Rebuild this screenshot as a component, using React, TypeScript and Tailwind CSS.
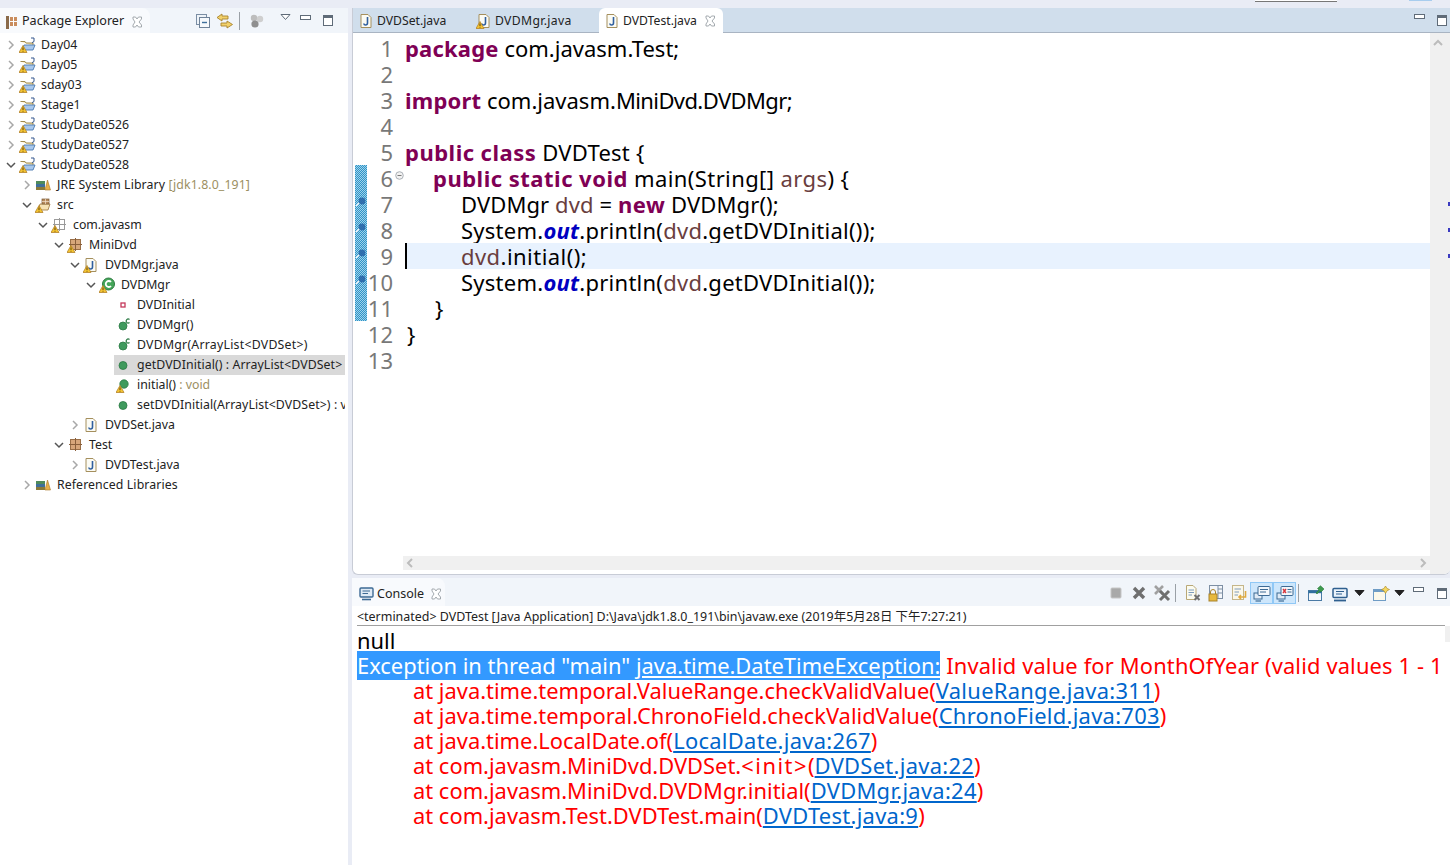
import React from 'react';

const uiFont = "font-['Noto_Sans','Noto_Sans_CJK_SC',sans-serif]";

const Warn = ({ x = 0, y = 8 }: { x?: number; y?: number }) => (
  <g transform={`translate(${x} ${y})`}>
    <path d="M4 0.5 L8 7.5 H0 Z" fill="#f4c430" stroke="#b5832a" strokeWidth="0.8" />
    <path d="M4 2.5 V5 M4 5.8 V6.6" stroke="#4a3000" strokeWidth="0.9" />
  </g>
);

const Chevron = ({ open }: { open?: boolean }) => (
  <svg width="12" height="12" viewBox="0 0 12 12" fill="none" className="shrink-0">
    {open ? (
      <path d="M2 4 L6 8 L10 4" stroke="#555" strokeWidth="1.5" />
    ) : (
      <path d="M4 2 L8 6 L4 10" stroke="#a8a8a8" strokeWidth="1.5" />
    )}
  </svg>
);

const ProjectIcon = () => (
  <svg width="17" height="16" viewBox="0 0 17 16" fill="none">
    <path d="M1.5 4.5 H6 L7 6 H14 V9" stroke="#a08a50" strokeWidth="1" fill="#f3e5b8" />
    <path d="M3 13 L5 8 H16 L14 13 Z" fill="#a9c8ec" stroke="#4a78b0" strokeWidth="0.9" />
    <path d="M12 1 H15 V4 Q15 5.5 13 5.5" stroke="#33548c" strokeWidth="1" />
    <Warn x={0} y={8} />
  </svg>
);

const LibIcon = () => (
  <svg width="16" height="16" viewBox="0 0 16 16">
    <rect x="1" y="4" width="9" height="3" fill="#4f8a5b" />
    <rect x="1" y="7" width="9" height="3" fill="#3f6f9c" />
    <rect x="1" y="10" width="9" height="3" fill="#8a7a3a" />
    <path d="M10 13 L12.5 3 L15.5 13 Z" fill="#e8b04a" stroke="#a8752a" strokeWidth="0.6" />
  </svg>
);

const SrcIcon = () => (
  <svg width="17" height="16" viewBox="0 0 17 16" fill="none">
    <path d="M3 13 L5 7 H15 L13 13 Z" fill="#f6e3b4" stroke="#a5814b" strokeWidth="0.9" />
    <rect x="7" y="2" width="7" height="5" fill="#b98d5e" stroke="#7a5a35" strokeWidth="0.7" />
    <path d="M10.5 2 V7 M7 4.5 H14" stroke="#f3e5d0" strokeWidth="0.7" />
    <Warn x={0} y={8} />
  </svg>
);

const PkgIcon = ({ empty, warn }: { empty?: boolean; warn?: boolean }) => (
  <svg width="16" height="16" viewBox="0 0 16 16" fill="none">
    <rect x="3.5" y="2.5" width="10" height="10" fill={empty ? '#fff' : '#d7a67a'} stroke={empty ? '#9a9a9a' : '#9a6f47'} />
    <path d="M8.5 1 V14 M2 7.5 H15" stroke={empty ? '#9a9a9a' : '#8a5f3b'} />
    {warn && <Warn x={0} y={8} />}
  </svg>
);

const JavaIcon = ({ warn }: { warn?: boolean }) => (
  <svg width="15" height="16" viewBox="0 0 15 16" fill="none" className="shrink-0">
    <path d="M3 1.5 H10 L13 4.5 V14.5 H3 Z" fill="#fbfbf4" stroke="#a58f5d" />
    <path d="M9.5 4 V10 Q9.5 12 7.5 12 Q6 12 5.8 10.5" stroke="#2f5f9f" strokeWidth="1.6" />
    {warn && <Warn x={0} y={8} />}
  </svg>
);

const ClassIcon = () => (
  <svg width="17" height="16" viewBox="0 0 17 16" fill="none">
    <circle cx="9.5" cy="7" r="6" fill="#45a65a" stroke="#2c7a3f" />
    <path d="M12 5 A3 3 0 1 0 12 9" stroke="#fff" strokeWidth="1.8" />
    <Warn x={0} y={8} />
  </svg>
);

const FieldIcon = () => (
  <svg width="16" height="16" viewBox="0 0 16 16">
    <rect x="5" y="6" width="4" height="4" fill="#fff" stroke="#c4385a" strokeWidth="1.3" />
  </svg>
);

const MethodIcon = () => (
  <svg width="16" height="16" viewBox="0 0 16 16">
    <circle cx="7" cy="8.5" r="4" fill="#3f9a5d" stroke="#2c7a45" strokeWidth="0.8" />
  </svg>
);

const CtorIcon = () => (
  <svg width="16" height="16" viewBox="0 0 16 16" fill="none">
    <circle cx="7" cy="9" r="4" fill="#3f9a5d" stroke="#2c7a45" strokeWidth="0.8" />
    <path d="M13.5 2.5 A2 2 0 1 0 13.5 5.5" stroke="#2c7a45" strokeWidth="1.2" />
  </svg>
);

const WarnMethodIcon = () => (
  <svg width="16" height="16" viewBox="0 0 16 16">
    <circle cx="8" cy="7" r="4.2" fill="#3f9a5d" stroke="#2c7a45" strokeWidth="0.8" />
    <Warn x={0} y={8} />
  </svg>
);

const PerspIcon = () => (
  <svg width="14" height="16" viewBox="0 0 14 16">
    <rect x="2" y="2" width="3" height="13" fill="#8a6a4a" />
    <rect x="6" y="3" width="7" height="4" fill="#c98d5e" />
    <rect x="6" y="8" width="7" height="4" fill="#c98d5e" />
    <path d="M9.5 3 V12" stroke="#fff" />
  </svg>
);

const TabClose = () => (
  <svg width="12" height="12" viewBox="0 0 12 12" fill="none" className="shrink-0">
    <path d="M2 1 L4.5 1 L6 3 L7.5 1 L10.5 1 L10.5 3 L8 6 L10.5 9 L10.5 11 L7.5 11 L6 9 L4.5 11 L2 11 L2 9 L4 6 L2 3 Z" stroke="#9aa0a6" strokeWidth="0.9" fill="#fff" />
  </svg>
);

const MinBtn = () => <div className="h-[5px] w-[11px] border border-[#5f6b78] bg-white" />;
const MaxBtn = () => (
  <div className="h-[11px] w-[10px] border border-[#5f6b78] bg-white">
    <div className="h-[2px] bg-[#5f6b78]" />
  </div>
);
const DropTri = ({ hollow }: { hollow?: boolean }) => (
  <svg width="11" height="6" viewBox="0 0 11 6">
    <path d="M1 0.5 H10 L5.5 5.5 Z" fill={hollow ? '#fff' : '#222'} stroke={hollow ? '#5f6b78' : '#222'} />
  </svg>
);

const CollapseIcon = () => (
  <svg width="16" height="16" viewBox="0 0 16 16" fill="none">
    <rect x="1.5" y="1.5" width="10" height="10" fill="#eef3f8" stroke="#7b8ea4" />
    <rect x="4.5" y="4.5" width="10" height="10" fill="#f6f9fc" stroke="#6f8298" />
    <path d="M7 9.5 H12" stroke="#3f6f9c" strokeWidth="1.4" />
  </svg>
);
const LinkIcon = () => (
  <svg width="18" height="16" viewBox="0 0 18 16" fill="#f2d16b" stroke="#a8832c" strokeWidth="0.9">
    <path d="M6 1 L1 4.5 L6 8 V6 H12 V3 H6 Z" />
    <path d="M11 8 L16.5 11.5 L11 15 V13 H5 V10 H11 Z" />
  </svg>
);
const BallsIcon = () => (
  <svg width="16" height="16" viewBox="0 0 16 16">
    <circle cx="5" cy="5" r="3.2" fill="#bdbdbd" />
    <circle cx="11" cy="6" r="3.2" fill="#cfcfcf" />
    <circle cx="6" cy="11" r="3.6" fill="#8f8f8f" />
  </svg>
);
const ConsoleIcon = () => (
  <svg width="15" height="14" viewBox="0 0 15 14" fill="none">
    <rect x="1" y="1" width="13" height="9" rx="1" fill="#dfeaf5" stroke="#3d6a94" strokeWidth="1.4" />
    <path d="M3.5 4 H11 M3.5 6.5 H9" stroke="#3d6a94" />
    <path d="M3 12.5 H12" stroke="#3d6a94" strokeWidth="1.6" />
  </svg>
);

const StopIcon = () => (
  <svg width="16" height="16" viewBox="0 0 16 16"><rect x="3" y="3" width="10" height="10" rx="1" fill="#a9a9a9" stroke="#c6c6c6" /></svg>
);
const XIcon = () => (
  <svg width="16" height="16" viewBox="0 0 16 16" fill="none"><path d="M3 3 L13 13 M13 3 L3 13" stroke="#6f6f6f" strokeWidth="3.4" /></svg>
);
const XXIcon = () => (
  <svg width="18" height="18" viewBox="0 0 18 18" fill="none">
    <path d="M2 2 L10 10 M10 2 L2 10" stroke="#a0a0a0" strokeWidth="2.6" />
    <path d="M7 7 L16 16 M16 7 L7 16" stroke="#6f6f6f" strokeWidth="3" />
  </svg>
);
const DocXIcon = () => (
  <svg width="18" height="18" viewBox="0 0 18 18" fill="none">
    <path d="M2.5 1.5 H9 L12 4.5 V15.5 H2.5 Z" fill="#fbfbf0" stroke="#b9a877" />
    <path d="M4.5 6 H10 M4.5 8.5 H10 M4.5 11 H8" stroke="#7f9cbc" />
    <path d="M10.5 11 L15.5 16 M15.5 11 L10.5 16" stroke="#707070" strokeWidth="2" />
  </svg>
);
const LockIcon = () => (
  <svg width="18" height="18" viewBox="0 0 18 18" fill="none">
    <rect x="2.5" y="1.5" width="13" height="13" fill="#f4f7fb" stroke="#7d8fa4" />
    <path d="M11 1.5 V14.5 M11 5 H15.5 M11 9 H15.5" stroke="#7d8fa4" />
    <path d="M3.5 10 V8 A2.5 2.5 0 0 1 8.5 8 V10" stroke="#a8832c" />
    <rect x="2" y="10" width="8" height="7" fill="#e8b93c" stroke="#a8832c" />
  </svg>
);
const WrapIcon = () => (
  <svg width="18" height="18" viewBox="0 0 18 18" fill="none">
    <rect x="2.5" y="1.5" width="11" height="14" fill="#fbf8ea" stroke="#c5b68a" />
    <path d="M4.5 5 H11 M4.5 8 H9 M4.5 11 H8" stroke="#7f9cbc" />
    <path d="M15.5 7 V13 H9 M11 11 L9 13 L11 15" stroke="#e0a93c" strokeWidth="1.6" />
  </svg>
);
const MsgIcon = ({ red }: { red?: boolean }) => (
  <svg width="18" height="17" viewBox="0 0 18 17" fill="none">
    <rect x="1" y="8" width="8" height="6" fill="#dfeaf5" stroke="#3d6a94" />
    <path d="M2.5 16 H8" stroke="#3d6a94" strokeWidth="1.2" />
    <rect x="5" y="1.5" width="12" height="9" rx="1" fill="#f3f7fb" stroke="#3d6a94" />
    {red ? (
      <path d="M7 4 L10 8 M10 4 L7 8" stroke="#d8333a" strokeWidth="1.4" />
    ) : (
      <path d="M7 4.5 H15 M7 7 H13" stroke="#3d6a94" />
    )}
    {red && <path d="M11.5 4.5 H15.5 M11.5 7 H15.5" stroke="#3d6a94" />}
  </svg>
);
const PinIcon = () => (
  <svg width="18" height="17" viewBox="0 0 18 17" fill="none">
    <rect x="1.5" y="5.5" width="13" height="10" fill="#f4f8fb" stroke="#4a7aa5" />
    <path d="M1.5 7 H14.5" stroke="#2f6f9f" strokeWidth="2.4" />
    <path d="M9 8 L12 5 L10.5 3.5 L13.5 0.8 L17 4 L14 7 L12.8 5.8 L10 9 Z" fill="#3f9a4f" stroke="#2a7a3a" strokeWidth="0.6" />
  </svg>
);
const NewConsoleIcon = () => (
  <svg width="18" height="17" viewBox="0 0 18 17" fill="none">
    <rect x="2" y="3.5" width="14" height="9" rx="1" fill="#eaf2fa" stroke="#2f5f8f" strokeWidth="1.5" />
    <path d="M5 6.5 H13 M5 9 H11" stroke="#2f5f8f" />
    <path d="M3 15.5 H15" stroke="#2f5f8f" strokeWidth="1.8" />
  </svg>
);
const OpenConsoleIcon = () => (
  <svg width="18" height="17" viewBox="0 0 18 17" fill="none">
    <rect x="1.5" y="4.5" width="12" height="11" fill="#fbf8ea" stroke="#6f9cc5" />
    <path d="M1.5 6 H13.5" stroke="#6f9cc5" strokeWidth="2" />
    <path d="M13.5 1 L15 3.5 L17.5 4.5 L15 5.8 L13.5 8.5 L12 5.8 L9.5 4.5 L12 3.5 Z" fill="#f6d860" stroke="#b3902c" strokeWidth="0.7" />
  </svg>
);

type Row = { level: number; text: string; muted?: string; track?: string; chevron?: 'open' | 'closed'; icon: React.ReactNode; selected?: boolean };

const rows: Row[] = [
  { level: 0, text: 'Day04', chevron: 'closed', icon: <ProjectIcon /> },
  { level: 0, text: 'Day05', chevron: 'closed', icon: <ProjectIcon /> },
  { level: 0, text: 'sday03', chevron: 'closed', icon: <ProjectIcon /> },
  { level: 0, text: 'Stage1', chevron: 'closed', icon: <ProjectIcon /> },
  { level: 0, text: 'StudyDate0526', chevron: 'closed', icon: <ProjectIcon /> },
  { level: 0, text: 'StudyDate0527', chevron: 'closed', icon: <ProjectIcon /> },
  { level: 0, text: 'StudyDate0528', chevron: 'open', icon: <ProjectIcon /> },
  { level: 1, text: 'JRE System Library', muted: ' [jdk1.8.0_191]', track: 'tracking-[0.1px]', chevron: 'closed', icon: <LibIcon /> },
  { level: 1, text: 'src', chevron: 'open', icon: <SrcIcon /> },
  { level: 2, text: 'com.javasm', chevron: 'open', icon: <PkgIcon empty warn /> },
  { level: 3, text: 'MiniDvd', chevron: 'open', icon: <PkgIcon warn /> },
  { level: 4, text: 'DVDMgr.java', chevron: 'open', icon: <JavaIcon warn /> },
  { level: 5, text: 'DVDMgr', chevron: 'open', icon: <ClassIcon /> },
  { level: 6, text: 'DVDInitial', icon: <FieldIcon /> },
  { level: 6, text: 'DVDMgr()', icon: <CtorIcon /> },
  { level: 6, text: 'DVDMgr(ArrayList<DVDSet>)', track: 'tracking-[0.24px]', icon: <CtorIcon /> },
  { level: 6, text: 'getDVDInitial() : ArrayList<DVDSet>', track: 'tracking-[0.09px]', icon: <MethodIcon />, selected: true },
  { level: 6, text: 'initial()', muted: ' : void', icon: <WarnMethodIcon /> },
  { level: 6, text: 'setDVDInitial(ArrayList<DVDSet>) : void', track: 'tracking-[0.09px]', icon: <MethodIcon /> },
  { level: 4, text: 'DVDSet.java', chevron: 'closed', icon: <JavaIcon /> },
  { level: 3, text: 'Test', chevron: 'open', icon: <PkgIcon /> },
  { level: 4, text: 'DVDTest.java', chevron: 'closed', icon: <JavaIcon /> },
  { level: 1, text: 'Referenced Libraries', track: 'tracking-[0.1px]', chevron: 'closed', icon: <LibIcon /> },
];

const indents = ['pl-[5px]', 'pl-[21px]', 'pl-[37px]', 'pl-[53px]', 'pl-[69px]', 'pl-[85px]', 'pl-[85px]'];

const TreeRow = ({ row }: { row: Row }) => (
  <div className={`flex h-[20px] items-center overflow-hidden whitespace-nowrap ${indents[row.level]}`}>
    <div className="flex w-[12px] shrink-0 justify-center">
      {row.chevron && <Chevron open={row.chevron === 'open'} />}
    </div>
    <div className={`flex h-[20px] min-w-0 flex-1 items-center overflow-hidden ${row.level === 6 ? 'ml-[17px]' : ''} ${row.selected ? 'bg-[#d9d9d9]' : ''}`}>
      <div className={`flex shrink-0 items-center justify-start ${row.level === 6 ? 'w-[23px] pl-[2px]' : 'w-[24px] pl-[2px]'}`}>{row.icon}</div>
      <span className={`text-[12.3px] text-[#222] ${row.track ?? ''}`}>
        {row.text}
        {row.muted && <span className="text-[#9c8f62]">{row.muted}</span>}
      </span>
    </div>
  </div>
);

const Kw = ({ children, tight }: { children: React.ReactNode; tight?: boolean }) => (
  <span className={`font-bold text-[#7f0055] ${tight ? 'tracking-[0.2px]' : 'tracking-[0.5px]'}`}>{children}</span>
);
const Out = () => <span className="font-bold italic text-[#0000c0]">out</span>;
const Local = ({ children }: { children: React.ReactNode }) => <span className="text-[#6a3e3e]">{children}</span>;

type CodeLine = { indent?: string; track?: string; content?: React.ReactNode; changed?: boolean; mark?: boolean; fold?: boolean; current?: boolean };

const code: CodeLine[] = [
  { track: 'tracking-[0px]', content: <><Kw tight>package</Kw> com.javasm.Test;</> },
  {},
  { track: 'tracking-[0px]', content: <><Kw tight>import</Kw> com.javasm.<span className="tracking-[-0.6px]">MiniDvd.DVDMgr;</span></> },
  {},
  { content: <><Kw>public</Kw> <Kw>class</Kw> DVDTest {'{'}</> },
  { indent: 'pl-[28px]', track: 'tracking-[0.4px]', changed: true, fold: true, content: <><Kw>public</Kw> <Kw>static</Kw> <Kw>void</Kw> main(String[] <Local>args</Local>) {'{'}</> },
  { indent: 'pl-[56px]', track: 'tracking-[0.1px]', changed: true, mark: true, content: <>DVDMgr <Local>dvd</Local> = <Kw>new</Kw> DVDMgr();</> },
  { indent: 'pl-[56px]', changed: true, mark: true, content: <>System.<Out />.println(<Local>dvd</Local>.getDVDInitial());</> },
  { indent: 'pl-[54px]', track: 'tracking-[0.45px]', changed: true, mark: true, current: true, content: <><Local>dvd</Local>.initial();</> },
  { indent: 'pl-[56px]', changed: true, mark: true, content: <>System.<Out />.println(<Local>dvd</Local>.getDVDInitial());</> },
  { indent: 'pl-[30px]', changed: true, content: <>{'}'}</> },
  { indent: 'pl-[2px]', content: <>{'}'}</> },
  {},
];

const EditorLine = ({ line, n }: { line: CodeLine; n: number }) => (
  <div className="flex h-[26px] text-[22px] leading-[26px]">
    <div className={`relative ml-[2px] w-[12px] shrink-0 ${line.changed ? 'bg-[repeating-conic-gradient(#2f93c8_0_25%,#9fd3ea_0_50%)] bg-[length:2px_2px]' : ''}`}>
      {line.mark && (
        <svg width="12" height="12" viewBox="0 0 12 12" className="absolute left-0 top-[5px]" fill="none">
          <circle cx="7" cy="5" r="3.4" fill="#2f6fae" />
          <path d="M1 10 L4 7" stroke="#e8f2fb" strokeWidth="1.2" />
        </svg>
      )}
    </div>
    <div className="w-[26px] shrink-0 text-right text-[#787878]">{n}</div>
    <div className="flex w-[12px] shrink-0 items-center justify-center">
      {line.fold && (
        <svg width="9" height="9" viewBox="0 0 9 9" fill="none" className="mb-[5px]">
          <circle cx="4.5" cy="4.5" r="3.8" fill="#f2f2f2" stroke="#aab0b6" />
          <path d="M2.5 4.5 H6.5" stroke="#7a7a7a" />
        </svg>
      )}
    </div>
    <div className={`min-w-0 flex-1 whitespace-pre text-black ${line.track ?? 'tracking-[0.25px]'} ${line.indent ?? ''} ${line.current ? 'border-l-2 border-black bg-[#e8f2fe]' : ''}`}>
      {line.content}
    </div>
  </div>
);

const Tab = ({ name, warn, active, width, track }: { name: string; warn?: boolean; active?: boolean; width: string; track?: string }) => (
  <div className={`flex h-[25px] items-center pl-[5px] pt-[2px] ${width} ${active ? 'rounded-t-[6px] bg-white' : ''}`}>
    <JavaIcon warn={warn} />
    <span className={`ml-[4px] text-[12.2px] text-[#222] ${track ?? ''}`}>{name}</span>
    {active && <div className="ml-[7px]"><TabClose /></div>}
  </div>
);

const Link = ({ children }: { children: React.ReactNode }) => <span className="tracking-[0.3px] text-[#0066cc] underline">{children}</span>;

const trace: [React.ReactNode, string][] = [
  ['at java.time.temporal.ValueRange.checkValidValue(', 'ValueRange.java:311'],
  ['at java.time.temporal.ChronoField.checkValidValue(', 'ChronoField.java:703'],
  ['at java.time.LocalDate.of(', 'LocalDate.java:267'],
  [<>at com.javasm.MiniDvd.DVDSet.<span className="tracking-[1.5px]">{'<init>'}</span>(</>, 'DVDSet.java:22'],
  ['at com.javasm.MiniDvd.DVDMgr.initial(', 'DVDMgr.java:24'],
  ['at com.javasm.Test.DVDTest.main(', 'DVDTest.java:9'],
];

const Slot = ({ children, on }: { children: React.ReactNode; on?: boolean }) => (
  <div className={`flex h-[22px] w-[23px] items-center justify-center ${on ? 'border border-[#90c8f6] bg-[#cde6fb]' : ''}`}>{children}</div>
);

export default function App() {
  return (
    <div className={`flex h-[865px] w-[1450px] flex-col overflow-hidden bg-[#e9ecf5] ${uiFont}`}>
      <div className="flex h-[8px] shrink-0 items-start">
        <div className="ml-[1255px] h-[2px] w-[82px] border-b border-[#777] bg-white" />
        <div className="ml-[72px] h-[1px] w-[23px] bg-[#a8cdee]" />
      </div>
      <div className="flex min-h-0 flex-1">
        {/* package explorer */}
        <div className="flex w-[348px] shrink-0 flex-col bg-white">
          <div className="flex h-[25px] shrink-0 items-center bg-[#f1f5fa]">
            <div className="flex h-[25px] w-[150px] shrink-0 items-center whitespace-nowrap rounded-tr-[8px] bg-[#f8fafd] pl-[4px] pt-[2px]">
              <PerspIcon />
              <span className="ml-[4px] text-[12.6px] text-[#222]">Package Explorer</span>
              <div className="ml-[7px]"><TabClose /></div>
            </div>
            <div className="ml-[45px] flex items-center">
              <CollapseIcon />
              <div className="ml-[5px]"><LinkIcon /></div>
              <div className="ml-[5px] h-[18px] w-px bg-[#9aa0a6]" />
              <div className="ml-[9px]"><BallsIcon /></div>
              <div className="mb-[7px] ml-[15px]"><DropTri hollow /></div>
              <div className="mb-[7px] ml-[9px]"><MinBtn /></div>
              <div className="ml-[12px]"><MaxBtn /></div>
            </div>
          </div>
          <div className="pt-[2px] pr-[3px]">
            {rows.map((r) => (
              <TreeRow key={r.text + r.level} row={r} />
            ))}
          </div>
        </div>

        <div className="ml-[4px] flex min-w-0 flex-1 flex-col">
          {/* editor */}
          <div className="flex h-[567px] shrink-0 flex-col overflow-hidden rounded-b-[6px] border-b border-l border-[#c8ccd6] bg-white">
            <div className="flex h-[25px] shrink-0 items-center border-b border-[#a9b4c2] bg-[#d0deec]">
              <Tab name="DVDSet.java" width="w-[118px]" />
              <Tab name="DVDMgr.java" warn width="w-[128px]" track="tracking-[0.35px]" />
              <Tab name="DVDTest.java" active width="w-[124px]" />
              <div className="ml-auto flex items-center pr-[3px]">
                <div className="mb-[7px] mr-[12px]"><MinBtn /></div>
                <MaxBtn />
              </div>
            </div>
            <div className="flex min-h-0 flex-1">
              <div className="flex min-w-0 flex-1 flex-col pt-[2px] font-['Noto_Sans',sans-serif]">
                {code.map((l, i) => (
                  <EditorLine key={i} line={l} n={i + 1} />
                ))}
                <div className="mb-[4px] ml-[50px] mt-auto flex h-[14px] items-center justify-between bg-[#f0f0f0] px-[3px]">
                  <svg width="8" height="10" viewBox="0 0 8 10" fill="none"><path d="M6 1 L2 5 L6 9" stroke="#bcbcbc" strokeWidth="2" /></svg>
                  <svg width="8" height="10" viewBox="0 0 8 10" fill="none"><path d="M2 1 L6 5 L2 9" stroke="#bcbcbc" strokeWidth="2" /></svg>
                </div>
              </div>
              <div className="relative flex w-[20px] shrink-0 justify-start bg-[#f0f0f0] pt-[6px] pl-[3px]">
                <svg width="10" height="8" viewBox="0 0 10 8" fill="none"><path d="M1 6 L5 2 L9 6" stroke="#bcbcbc" strokeWidth="2" /></svg>
                <div className="absolute right-0 top-[169px] h-[4px] w-[2px] bg-[#3a3ac0]" />
                <div className="absolute right-0 top-[195px] h-[4px] w-[2px] bg-[#3a3ac0]" />
                <div className="absolute right-0 top-[221px] h-[4px] w-[2px] bg-[#3a3ac0]" />
              </div>
            </div>
          </div>

          {/* console */}
          <div className="mt-[3px] flex min-h-0 flex-1 flex-col bg-white">
            <div className="flex h-[28px] shrink-0 items-center bg-[#f1f5fa]">
              <div className="flex h-[28px] w-[93px] items-center rounded-tr-[8px] bg-[#f8fafd] pl-[7px] pt-[4px]">
                <ConsoleIcon />
                <span className="ml-[3px] text-[12.5px] text-[#222]">Console</span>
                <div className="ml-[6px]"><TabClose /></div>
              </div>
              <div className="ml-auto flex items-center pr-[3px] pt-[2px]">
                <Slot><StopIcon /></Slot>
                <Slot><XIcon /></Slot>
                <Slot><XXIcon /></Slot>
                <div className="ml-[2px] mr-[5px] h-[18px] w-px bg-[#9aa0a6]" />
                <Slot><DocXIcon /></Slot>
                <Slot><LockIcon /></Slot>
                <Slot><WrapIcon /></Slot>
                <Slot on><MsgIcon /></Slot>
                <Slot on><MsgIcon red /></Slot>
                <div className="ml-[2px] mr-[5px] h-[18px] w-px bg-[#9aa0a6]" />
                <Slot><PinIcon /></Slot>
                <div className="ml-[1px]"><Slot><NewConsoleIcon /></Slot></div>
                <div className="ml-[3px] w-[14px]"><DropTri /></div>
                <div className="ml-[1px]"><Slot><OpenConsoleIcon /></Slot></div>
                <div className="ml-[2px] w-[14px]"><DropTri /></div>
                <div className="mb-[7px] ml-[5px] mr-[13px]"><MinBtn /></div>
                <MaxBtn />
              </div>
            </div>
            <div className="mx-[5px] flex h-[20px] shrink-0 items-center border-b border-[#a0a0a0] pt-[4px] text-[12.45px] text-[#222]">
              {'<terminated> DVDTest [Java Application] D:\\Java\\jdk1.8.0_191\\bin\\javaw.exe (2019年5月28日 下午7:27:21)'}
            </div>
            <div className="flex min-h-0 flex-1">
              <div className="min-w-0 flex-1 overflow-hidden whitespace-pre pl-[5px] pt-[2px] text-[21.9px] leading-[25px]">
                <div className="text-black">null</div>
                <div className="text-[#ff0000]">
                  <span className="bg-[#3399ff] text-white">
                    {'Exception in thread "main" '}
                    <span className="underline">java.time.DateTimeException:</span>
                  </span>
                  <span className="tracking-[0.15px]">{' Invalid value for MonthOfYear (valid values 1 - 1'}</span>
                </div>
                {trace.map(([a, b]) => (
                  <div key={b} className="pl-[56px] text-[#ff0000]">
                    {a}
                    <Link>{b}</Link>)
                  </div>
                ))}
              </div>
              <div className="h-[16px] w-[5px] shrink-0 bg-[#f0f0f0]" />
            </div>
          </div>
        </div>
      </div>
    </div>
  );
}
